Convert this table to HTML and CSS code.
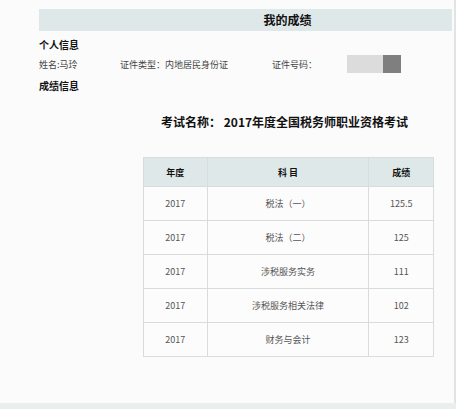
FILE: index.html
```html
<!DOCTYPE html>
<html lang="zh">
<head>
<meta charset="utf-8">
<link rel="stylesheet" href="styles.css">
</head>
<body>
<div class="page">
  <div class="title-bar">我的成绩</div>
  <div class="section-title first">个人信息</div>
  <div class="info-row">
    <span class="name">姓名:马玲</span>
    <span class="idtype">证件类型：内地居民身份证</span>
    <span class="idno">证件号码：</span>
    <span class="mask"><span class="mask-light"></span><span class="mask-dark"></span></span>
  </div>
  <div class="section-title">成绩信息</div>
  <div class="exam-name">考试名称： 2017年度全国税务师职业资格考试</div>
  <table class="scores">
    <thead>
      <tr><th class="c-year">年度</th><th class="c-subj">科 目</th><th class="c-score">成绩</th></tr>
    </thead>
    <tbody>
      <tr><td>2017</td><td>税法（一）</td><td>125.5</td></tr>
      <tr><td>2017</td><td>税法（二）</td><td>125</td></tr>
      <tr><td>2017</td><td>涉税服务实务</td><td>111</td></tr>
      <tr><td>2017</td><td>涉税服务相关法律</td><td>102</td></tr>
      <tr><td>2017</td><td>财务与会计</td><td>123</td></tr>
    </tbody>
  </table>
</div>
<div class="bottom-strip"></div>
</body>
</html>
```

FILE: styles.css
```css
html, body {
  margin: 0;
  padding: 0;
}
body {
  width: 456px;
  height: 409px;
  background: #fbfbfb;
  font-family: "Noto Sans CJK SC", "DejaVu Sans", sans-serif;
  color: #222;
  display: flex;
  flex-direction: column;
  overflow: hidden;
}
.page {
  flex: 1;
  padding: 9px 2px 0 39px;
  border-right: 2px solid #e2e4e4;
  box-sizing: border-box;
}
.title-bar {
  height: 22px;
  line-height: 22px;
  background: #dfe8e9;
  font-size: 12px;
  font-weight: bold;
  text-align: center;
  padding-left: 84px;
  color: #111;
}
.section-title {
  font-size: 10px;
  font-weight: bold;
  line-height: 14px;
  margin-top: 6px;
  color: #111;
}
.section-title.first {
  margin-top: 7px;
}
.info-row {
  display: flex;
  align-items: center;
  height: 18px;
  margin-top: 3px;
  font-size: 9px;
  color: #444;
}
.name { width: 81px; }
.idtype { width: 152px; }
.idno { width: 75px; }
.mask {
  display: flex;
  height: 18px;
}
.mask-light { width: 36px; background: #dcdcdc; }
.mask-dark { width: 18px; background: #7f7f7f; }
.exam-name {
  margin: 21px 0 0 122px;
  font-size: 12px;
  font-weight: bold;
  line-height: 16px;
  color: #111;
}
.scores {
  margin: 27px 0 0 104px;
  border-collapse: collapse;
  width: 291px;
  font-size: 9px;
  color: #555;
}
.scores th, .scores td {
  border: 1px solid #d9dcdc;
  text-align: center;
  padding: 0;
}
.scores th {
  height: 28px;
  background: #dfe8e9;
  color: #111;
  font-weight: bold;
}
.scores td {
  height: 33px;
  background: #fcfcfc;
}
.c-year { width: 63px; }
.c-subj { width: 162px; }
.c-score { width: 64px; }
.bottom-strip {
  height: 6px;
  background: #eaeeed;
  flex: none;
}
```
